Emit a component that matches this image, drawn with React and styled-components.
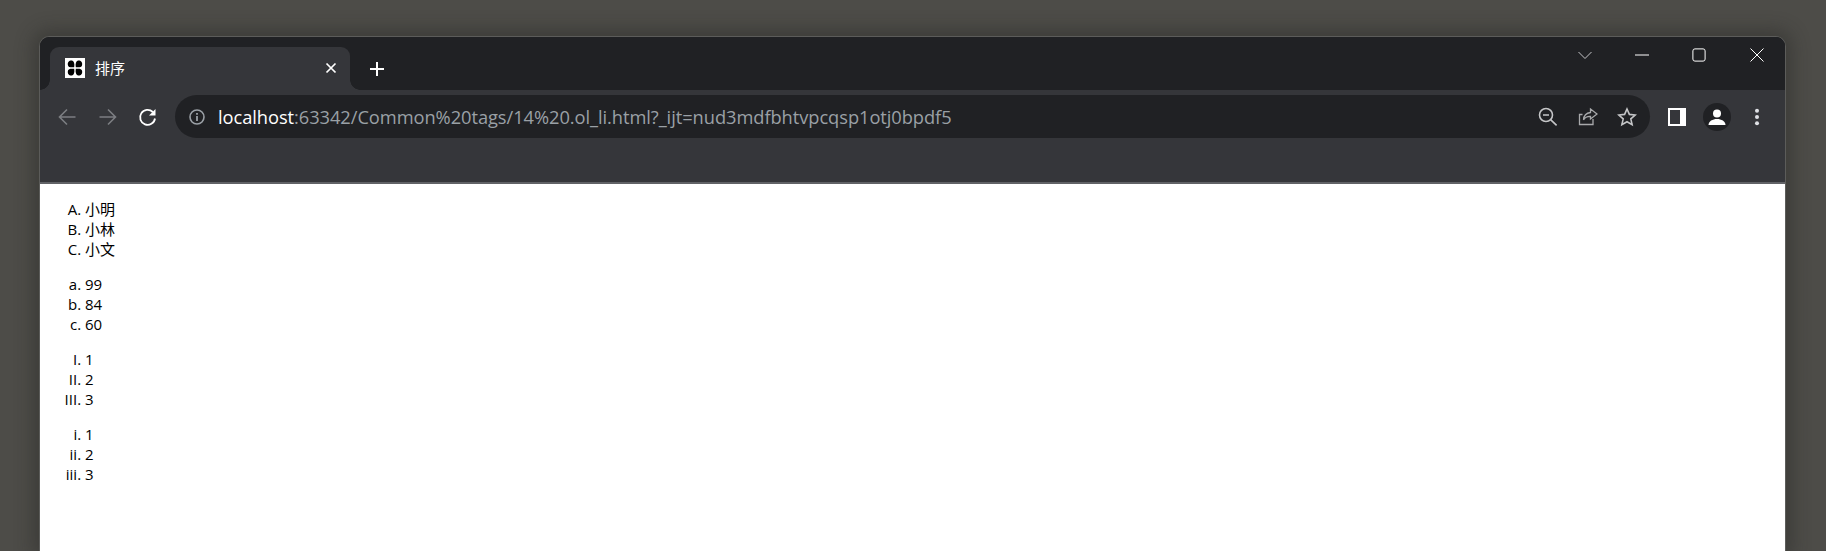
import React from "react";
import styled, { createGlobalStyle } from "styled-components";

const Global = createGlobalStyle`
  html, body { margin: 0; padding: 0; height: 100%; overflow: hidden; }
  #root { height: 100%; }
`;
const Desktop = styled.div`
  box-sizing: border-box; height: 551px; padding: 36px 40px 0 39px;
  background: #4d4c48; font-family: "Open Sans", "Noto Sans CJK SC", sans-serif;
`;
const Win = styled.div`
  box-sizing: border-box; height: 100%; display: flex; flex-direction: column;
  border: 1px solid #5c5c5a; border-bottom: 0; border-radius: 10px 10px 0 0; overflow: hidden;
  background: #202124; box-shadow: 0 0 18px 6px rgba(40,40,38,.45);
`;
const Strip = styled.div`
  height: 53px; flex: none; display: flex; align-items: flex-end; padding-left: 10px; background: #202124;
`;
const Tab = styled.div`
  position: relative; width: 300px; height: 43px; box-sizing: border-box; display: flex; align-items: center;
  padding: 0 11px 1px 15px; background: #35363a; border-radius: 9px 9px 0 0; color: #fff;
  &::before, &::after { content: ""; position: absolute; bottom: 0; width: 10px; height: 10px; background: radial-gradient(circle at var(--cx) 0, #202124 9.5px, #35363a 10px); }
  &::before { left: -10px; --cx: 0; }
  &::after { right: -10px; --cx: 100%; }
`;
const Favicon = styled.svg`width: 20px; height: 20px; flex: none;`;
const TabTitle = styled.span`margin-left: 10px; flex: 1; font-size: 15px; line-height: 20px;`;
const TabClose = styled.svg`width: 12px; height: 12px; flex: none; margin-right: 2px;`;
const NewTab = styled.svg`width: 16px; height: 16px; margin: 0 0 13px 19px; flex: none;`;
const Spacer = styled.div`flex: 1;`;
const Controls = styled.div`align-self: flex-start; display: flex; align-items: center; height: 36px; padding-right: 21px;`;
const Ctl = styled.svg`width: 14px; height: 14px; margin-left: ${p => p.$gap}px;`;
const Toolbar = styled.div`
  height: 92px; flex: none; box-sizing: border-box; display: flex; align-items: flex-start;
  padding: 5px 8px 0 7px; background: #35363a;
`;
const Btn = styled.div`
  width: 40px; height: 43px; flex: none; display: flex; align-items: center; justify-content: center;
  color: ${p => p.$color || "#fff"};
`;
const Icon = styled.svg`width: 20px; height: 20px;`;
const Omni = styled.div`
  flex: 1; height: 43px; margin: 0 7px 0 8px; display: flex; align-items: center; border-radius: 22px;
  background: #202124; padding: 0 3px 0 13px;
`;
const OmniIcon = styled.svg`width: 18px; height: 18px; flex: none; margin-right: 12px;`;
const Url = styled.div`flex: 1; font-size: 18.3px; color: #9aa0a6; white-space: nowrap; letter-spacing: -.06px;`;
const Host = styled.span`color: #fff;`;
const OmniBtn = styled.div`width: 39.5px; display: flex; justify-content: center; color: ${p => p.$color};`;
const Avatar = styled.div`width: 28px; height: 28px; border-radius: 50%; background: #202124; display: flex; align-items: center; justify-content: center;`;
const Line = styled.div`height: 2px; flex: none; background: #616266;`;
const Content = styled.div`
  flex: 1; background: #fff; color: #000; padding-top: 15px;
  font-size: 15px; line-height: 20px; font-family: "Open Sans", "Noto Sans CJK SC", sans-serif;
`;
const List = styled.ol`
  margin: 0 0 15px 0; padding: 0 0 0 45px; list-style-type: ${p => p.$kind};
`;

const g = { fill: "none", stroke: "currentColor", strokeWidth: 1.6 };
const lists = [
  ["upper-alpha", ["小明", "小林", "小文"]],
  ["lower-alpha", ["99", "84", "60"]],
  ["upper-roman", ["1", "2", "3"]],
  ["lower-roman", ["1", "2", "3"]],
];

export default function App() {
  return (
    <Desktop>
      <Global />
      <Win>
        <Strip>
          <Tab>
            <Favicon viewBox="0 0 20 20">
              <rect width="20" height="20" fill="#fff" />
              <path d="M3 7.5C2 3.5 5 2 7 2.5c2 .5 2.8 3 2.2 6.700C6 9.500 3.700 9.500 3 7.500zM17 7.500C18 3.500 15 2 13 2.500c-2 .5-2.800 3-2.200 6.700 3.200.3 5.500.3 6.200-1.700zM3 12.500C2 16.500 5 18 7 17.500c2-.5 2.800-3 2.200-6.700-3.200-.3-5.500-.3-6.200 1.700zM17 12.500c1 4-2 5.500-4 5-2-.5-2.800-3-2.200-6.700 3.200-.3 5.500-.3 6.200 1.700z" fill="#000" />
            </Favicon>
            <TabTitle>排序</TabTitle>
            <TabClose viewBox="0 0 12 12"><path d="M1.500 1.500l9 9M10.500 1.500l-9 9" stroke="#fff" strokeWidth="1.700" /></TabClose>
          </Tab>
          <NewTab viewBox="0 0 16 16"><path d="M8 1v14M1 8h14" stroke="#fff" strokeWidth="2" /></NewTab>
          <Spacer />
          <Controls>
            <Ctl $gap={0} viewBox="0 0 14 14"><path d="M.5 4l6.500 6.500L13.500 4" fill="none" stroke="#c4c5c7" strokeWidth="1" /></Ctl>
            <Ctl $gap={43} viewBox="0 0 14 14"><path d="M0 7h14" stroke="#fff" strokeWidth="1" /></Ctl>
            <Ctl $gap={43} viewBox="0 0 14 14"><rect x=".9" y=".9" width="12.200" height="12.200" rx="2" fill="none" stroke="#fff" strokeWidth="1" /></Ctl>
            <Ctl $gap={44} viewBox="0 0 14 14"><path d="M.5.500l13 13M13.500.500l-13 13" stroke="#fff" strokeWidth="1" /></Ctl>
          </Controls>
        </Strip>
        <Toolbar>
          <Btn $color="#7c7e82"><Icon viewBox="0 0 20 20" {...g}><path d="M18.500 10h-16M10 2.500L2.500 10l7.500 7.500" /></Icon></Btn>
          <Btn $color="#7c7e82"><Icon viewBox="0 0 20 20" {...g}><path d="M2.500 10h16M11 2.500l7.500 7.500-7.500 7.500" /></Icon></Btn>
          <Btn><Icon viewBox="0 0 20 20" {...g} strokeWidth="1.800"><path d="M18 11.500A7.500 7.500 0 1 1 15.800 5" /><path d="M18.500 2v6.500H12z" fill="#fff" stroke="none" /></Icon></Btn>
          <Omni>
            <OmniIcon viewBox="0 0 18 18"><circle cx="9" cy="9" r="7" fill="none" stroke="#9aa0a6" strokeWidth="1.600" /><path d="M9 8v5M9 5v1.700" stroke="#9aa0a6" strokeWidth="1.800" /></OmniIcon>
            <Url><Host>localhost</Host>:63342/Common%20tags/14%20.ol_li.html?_ijt=nud3mdfbhtvpcqsp1otj0bpdf5</Url>
            <OmniBtn $color="#c4c5c7"><Icon viewBox="0 0 20 20" {...g}><circle cx="8" cy="8" r="6.500" /><path d="M12.600 12.600l6 5.800M5 8h6" /></Icon></OmniBtn>
            <OmniBtn $color="#a8a9ab"><Icon viewBox="0 0 20 20" fill="none" stroke="currentColor" strokeWidth="1.300"><path d="M15 12v5.500H1.500V7.500h3" /><path d="M12.500 2l6.500 5-6.500 5V9.300c-3.500-.2-5.500 1-7 3.500.3-4 3-6.800 7-7.300z" /></Icon></OmniBtn>
            <OmniBtn $color="#c4c5c7"><Icon viewBox="0 0 20 20" {...g}><path d="M10 2l2.400 5.400 5.800.6-4.400 3.900 1.300 5.800L10 14.700l-5.100 3 1.300-5.800L1.800 8l5.800-.6z" /></Icon></OmniBtn>
          </Omni>
          <Btn><Icon viewBox="0 0 20 20"><path fillRule="evenodd" d="M1 1h18v18H1zM3 3v14h10V3z" fill="#fff" /><rect x="13" y="3" width="4" height="14" fill="#fff" /></Icon></Btn>
          <Btn><Avatar><Icon viewBox="0 0 20 20"><circle cx="10" cy="6.500" r="4" fill="#fff" /><path d="M1.500 18c0-3.800 4.200-6 8.500-6s8.500 2.200 8.500 6z" fill="#fff" /></Icon></Avatar></Btn>
          <Btn><Icon viewBox="0 0 20 20"><circle cx="10" cy="3.700" r="2" fill="#dfe1e5" /><circle cx="10" cy="10" r="2" fill="#dfe1e5" /><circle cx="10" cy="16.300" r="2" fill="#dfe1e5" /></Icon></Btn>
        </Toolbar>
        <Line />
        <Content>
          {lists.map(([kind, items]) => (
            <List key={kind} $kind={kind}>
              {items.map((t) => <li key={t}>{t}</li>)}
            </List>
          ))}
        </Content>
      </Win>
    </Desktop>
  );
}
